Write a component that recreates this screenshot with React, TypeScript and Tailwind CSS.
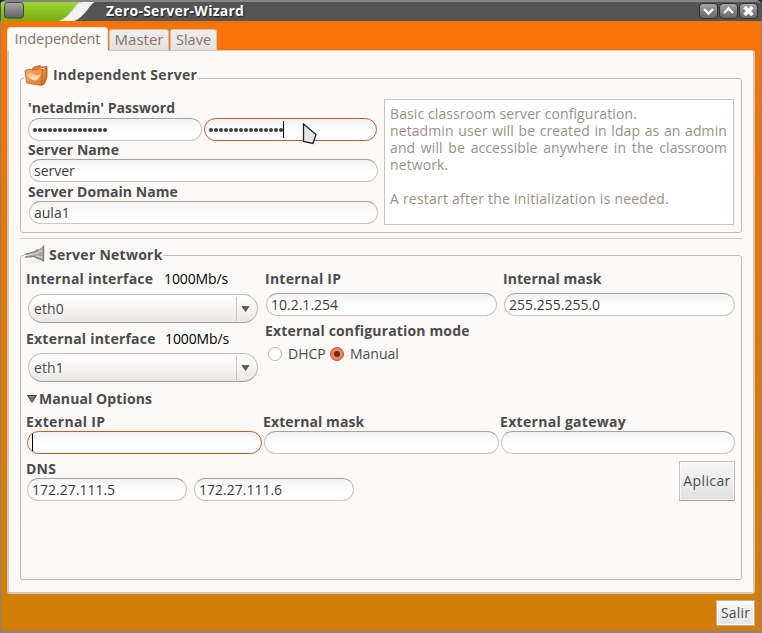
import React from "react";

function Label({ children, className = "" }: { children: React.ReactNode; className?: string }) {
  return <div className={`flex items-center whitespace-nowrap font-bold text-[#4c4c4c] ${className}`}>{children}</div>;
}

function Field({ children, className = "", focused = false }: { children?: React.ReactNode; className?: string; focused?: boolean }) {
  const tone = focused ? "border-[#d4532b]" : "border-[#cfc7bf] border-t-[#aca097]";
  return (
    <div className={`flex h-[23px] shrink-0 items-center whitespace-nowrap rounded-full border bg-linear-to-b from-[#f3f3f3] to-white to-60% pl-1 text-[#3c3c3c] ${tone} ${className}`}>
      {children}
    </div>
  );
}

function Dots() {
  return (
    <span className="flex gap-px">
      {Array.from({ length: 15 }, (_, i) => (
        <span key={i} className="size-1 rounded-full bg-[#3c3c3c]" />
      ))}
    </span>
  );
}

function Combo({ value }: { value: string }) {
  return (
    <div className="ml-[2px] flex h-[29px] w-[230px] items-center rounded-full border border-[#c9bfb5] border-b-[#a99d92] bg-linear-to-b from-white via-[#f6f4f3] to-[#eae6e4] pl-[5px] text-[#4c4c4c]">
      <span className="grow tracking-[0.1px]">{value}</span>
      <span className="flex h-6 w-[21px] items-center border-l border-[#cfc6bd] pl-1">
        <svg className="mt-px" width="9" height="6" viewBox="0 0 9 6"><path d="M1 .5h7L4.500 5.500z" fill="#5c5c5c" stroke="#4c4c4c" strokeWidth=".7" /></svg>
      </span>
    </div>
  );
}

function WindowButton({ d, thick }: { d: string; thick?: boolean }) {
  return (
    <div className="flex h-4 w-[19px] items-center justify-center rounded-[4px] border border-[#333] bg-linear-to-b from-[#a5a5a5] to-[#666]">
      <svg className="shrink-0" width="15" height="12" viewBox="0 0 15 12" fill="none" stroke="#fff" strokeWidth={thick ? 3.6 : 2.3}><path d={d} /></svg>
    </div>
  );
}

function FolderIcon() {
  return (
    <svg width="24" height="22" viewBox="0 0 24 22">
      <defs>
        <linearGradient id="folder" x1="0" y1="0" x2="1" y2="1"><stop stopColor="#f6ae70" /><stop offset="1" stopColor="#e2711c" /></linearGradient>
        <linearGradient id="shine" x1="0" y1="0" x2="0" y2="1"><stop stopColor="#f9b97c" /><stop offset="1" stopColor="#fde3c8" /></linearGradient>
      </defs>
      <path d="M8 4l2-2 6-1.500 1.500 1.500 5.500-.5v10l-2.500 7.500L17 20z" fill="#dd7a30" stroke="#a85a1e" strokeWidth=".8" />
      <path d="M13 4.500l8-2-.5 7-2 9z" fill="#f4e9dc" />
      <path d="M1 5.500l5-1.500 2 1 11-.5 3.500-1-1 8L18 20.500 2.500 18z" fill="url(#folder)" stroke="#bd6722" strokeWidth=".8" />
      <path d="M18.500 5L17.500 20" stroke="#b95c18" strokeWidth=".8" />
      <path d="M2.500 9.500q4-2.500 7-.5t7.500 0q-2 5.500-6 6.500-5-.5-8.500-6z" fill="url(#shine)" />
    </svg>
  );
}

function PlugIcon() {
  return (
    <svg width="22" height="20" viewBox="0 0 22 20">
      <ellipse cx="10" cy="16.500" rx="8" ry="2" fill="#ececea" />
      <path d="M.5 9.500L11 6.500 19 1.500v14L11 13l-1-1-9 .5v-1l4-1z" fill="#aaa9a5" />
      <path d="M.5 9.500L11 6.500l3-2" stroke="#777773" strokeWidth="1.200" fill="none" />
      <path d="M1 12.200l9-.7 4 2 5 2" stroke="#777773" fill="none" />
      <path d="M4 10l8-1.500 6-3M12 11l6 1" stroke="#dadad6" strokeWidth="1.200" fill="none" />
      <path d="M19.500.5v16" stroke="#85857f" strokeWidth="1.500" />
    </svg>
  );
}

export default function App() {
  return (
    <div className="flex h-[633px] w-[762px] flex-col overflow-hidden bg-[#062b38] font-['Open_Sans','Noto_Sans',sans-serif] text-[14px] leading-[17px]">
      <header className="flex h-[21px] shrink-0 items-center rounded-t-[6px] border-t-2 border-[#858585] bg-[#545454]">
        <svg className="shrink-0" width="100" height="19" viewBox="0 2 100 19">
          <defs>
            <linearGradient id="green" x1="0" y1="0" x2="0" y2="1"><stop stopColor="#a9d93a" /><stop offset="1" stopColor="#6fae0c" /></linearGradient>
            <linearGradient id="knob" x1="0" y1="0" x2="0" y2="1"><stop stopColor="#aaa" /><stop offset="1" stopColor="#626262" /></linearGradient>
          </defs>
          <path d="M1 0h84c-9 4-12 17-24 21H1z" fill="url(#green)" />
          <path d="M83 0h15C88 4 86 17 74 21H59C71 17 73 4 83 0z" fill="#f3f3f3" />
          <path d="M83 1C73 6 71 17 59 21" stroke="#c6cfbc" fill="none" />
          <rect x="4.500" y="2.500" width="19" height="15.500" rx="3" fill="url(#knob)" stroke="#3a4634" />
        </svg>
        <h1 className="mb-[2px] ml-[6px] grow text-[14px] font-bold text-white tracking-[0.25px] [text-shadow:1px_1px_1px_#222]">Zero-Server-Wizard</h1>
        <div className="mb-px mr-[4px] flex gap-px">
          <WindowButton d="M3 4l4.500 4.500L12 4" />
          <WindowButton d="M3 8l4.500-4.500L12 8" />
          <WindowButton thick d="M3.500 2l8 8M11.500 2l-8 8" />
        </div>
      </header>

      <main className="flex grow flex-col border-x border-b-2 border-[#858585] bg-linear-to-b from-[#f97306] from-10% to-[#d27d08] to-90% pl-[6px] pr-[6px]">
        <nav className="z-10 -mb-px flex h-[30px] shrink-0 items-end text-[15px] text-[#827568]">
          <div className="flex h-6 w-[101px] items-center justify-center rounded-t-[4px] border border-b-0 border-[#e9e2dc] bg-[#fbfaf8] pb-[2px] text-[14.5px]"><span className="tracking-[-0.1px]">Independent</span></div>
          <div className="mb-px ml-px flex h-[21px] w-[60px] items-center justify-center rounded-t-[3px] border border-b-0 border-[#cfc4ba] bg-linear-to-b from-[#f0eeec] to-[#e5e2df] pb-[2px]">Master</div>
          <div className="mb-px ml-px flex h-[21px] w-[47px] items-center justify-center rounded-t-[3px] border border-b-0 border-[#cfc4ba] bg-linear-to-b from-[#f0eeec] to-[#e5e2df] pb-[2px] text-[14.5px]">Slave</div>
        </nav>

        <div className="flex h-[544px] w-[748px] shrink-0 flex-col rounded-[3px] rounded-tl-none border-2 border-t border-[#d2c8bd] bg-[#fbfaf8] pl-[11px] pt-[27px]">
          <section className="h-[155px] w-[722px] rounded-[3px] border border-[#c5bbb2]">
            <div className="-mt-[15px] ml-[3px] flex h-6 w-fit items-center bg-[#fbfaf8]">
              <FolderIcon />
              <Label className="ml-[5px] pb-[3px] tracking-[0.33px]">Independent Server</Label>
            </div>
            <div className="flex">
              <div className="ml-[7px] w-[350px] pt-[10px]">
                <Label className="h-5 pb-[2px] tracking-[0.05px]">'netadmin' Password</Label>
                <div className="flex gap-[2px]">
                  <Field className="w-[174px]"><Dots /></Field>
                  <Field className="w-[173px]" focused>
                    <Dots /><span className="h-[17px] w-px bg-black" />
                    <svg className="ml-[18px] mt-[9px]" width="16" height="22" viewBox="0 0 16 22"><path d="M1.500 1v17.500l9.500 2 3-9z" fill="#e6e6e4" stroke="#222" strokeWidth="1.300" /></svg>
                  </Field>
                </div>
                <Label className="h-[18px] pb-[2px] tracking-[0.05px]">Server Name</Label>
                <Field className="ml-px w-[349px]">server</Field>
                <Label className="h-[19px] tracking-[0.06px]">Server Domain Name</Label>
                <Field className="ml-px w-[349px]">aula1</Field>
              </div>
              <div className="ml-[6px] mt-[11px] h-[126px] w-[350px] border border-[#cbc2b8] bg-white pl-[5px] pr-[6px] pt-[5px] text-[#9d9084]">
                <p className="text-justify tracking-[0.1px]">
                  Basic classroom server configuration.<br />
                  netadmin user will be created in ldap as an admin and will be accessible anywhere in the classroom network.<br /><br />
                  <span className="tracking-[0.22px]">A restart after the initialization is needed.</span>
                </p>
              </div>
            </div>
          </section>

          <div className="mt-[5px] h-px w-[722px] shrink-0 bg-[#d2cbc4]" />

          <section className="mt-4 h-[325px] w-[722px] shrink-0 rounded-[3px] border border-[#c5bbb2]">
            <div className="-mt-[13px] ml-[3px] flex h-6 w-fit items-center bg-[#fbfaf8]">
              <PlugIcon />
              <Label className="ml-[3px] pb-[2px] tracking-[0.26px]">Server Network</Label>
            </div>
            <div className="ml-[5px] flex h-[116px] pt-[2px]">
              <div className="w-[239px]">
                <div className="flex h-5 items-center pb-[2px]"><Label className="w-[138px] tracking-[0.2px]">Internal interface</Label><span className="tracking-[-0.1px] text-black">1000Mb/s</span></div>
                <div className="mt-[5px]"><Combo value="eth0" /></div>
                <div className="mt-[6px] flex h-5 items-center pb-[2px]"><Label className="w-[139px] tracking-[0.22px]">External interface</Label><span className="tracking-[-0.1px] text-black">1000Mb/s</span></div>
                <div className="mt-1"><Combo value="eth1" /></div>
              </div>
              <div className="w-[238px]">
                <Label className="h-5 pb-[2px] tracking-[0.25px]">Internal IP</Label>
                <Field className="ml-px mt-1 w-[231px]">10.2.1.254</Field>
                <Label className="mt-[5px] h-5 pb-[2px] tracking-[0.16px]">External configuration mode</Label>
                <div className="ml-[3px] mt-[3px] flex h-5 items-center text-[#4c4c4c]">
                  <span className="size-[14px] rounded-full border border-[#bdb4ab] bg-white" />
                  <span className="mb-[2px] ml-[6px] w-[42px]">DHCP</span>
                  <span className="flex size-[14px] items-center justify-center rounded-full border border-[#b35433] bg-[#f08358]"><span className="size-[6px] rounded-full bg-[#623020]" /></span>
                  <span className="mb-[2px] ml-[6px]">Manual</span>
                </div>
              </div>
              <div>
                <Label className="h-5 pb-[2px] tracking-[0.05px]">Internal mask</Label>
                <Field className="ml-px mt-1 w-[231px]">255.255.255.0</Field>
              </div>
            </div>
            <div className="ml-[6px] mt-[6px] flex h-5 items-center">
              <svg width="10" height="8" viewBox="0 0 10 8"><path d="M.5.5h9L5 7.500z" fill="#777" stroke="#444" /></svg>
              <Label className="mb-[2px] ml-[2px] tracking-[0.1px]">Manual Options</Label>
            </div>
            <div className="ml-[5px] mt-[3px] flex">
              <div className="w-[237px]"><Label className="h-[19px] tracking-[0.35px]">External IP</Label><Field focused className="ml-px w-[235px]"><span className="h-[17px] w-px bg-black" /></Field></div>
              <div className="w-[237px]"><Label className="h-[19px] tracking-[0.1px]">External mask</Label><Field className="ml-px w-[235px]" /></div>
              <div><Label className="h-[19px] tracking-[0.3px]">External gateway</Label><Field className="ml-px w-[234px]" /></div>
            </div>
            <div className="ml-[5px] mr-[6px] mt-[7px] flex h-10 justify-between">
              <div>
                <Label className="h-[17px] pb-[2px] tracking-[0.2px]">DNS</Label>
                <div className="ml-px flex gap-[7px]"><Field className="w-[160px]">172.27.111.5</Field><Field className="w-[160px]">172.27.111.6</Field></div>
              </div>
              <button className="h-10 w-14 border border-[#c9bfb5] border-b-[#a99d92] bg-linear-to-b from-[#f6f6f6] to-[#e2e2e2] pb-[2px] tracking-[0.4px] text-[#4c4c4c] shadow-[inset_0_0_0_1px_#f8f8f8]">Aplicar</button>
            </div>
          </section>
        </div>
        <button className="mt-[6px] h-[26px] w-[39px] self-end border border-[#c0b0a0] bg-linear-to-b from-[#fafafa] to-[#e4e4e4] pb-[2px] tracking-[0.2px] text-[#4c4c4c] shadow-[inset_0_0_0_1px_#fff]">Salir</button>
      </main>
    </div>
  );
}
